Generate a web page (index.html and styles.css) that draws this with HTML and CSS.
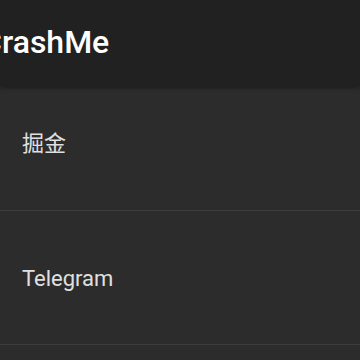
FILE: index.html
```html
<!DOCTYPE html>
<html>
<head>
<meta charset="utf-8">
<link rel="stylesheet" href="styles.css">
</head>
<body>
<header class="appbar">
  <h1 class="title">CrashMe</h1>
</header>
<ul class="list">
  <li class="item first">掘金</li>
  <li class="item">Telegram</li>
  <li class="item empty"></li>
</ul>
</body>
</html>
```
FILE: styles.css
```css
html, body {
  margin: 0;
  padding: 0;
  background: #2c2c2c;
  overflow: hidden;
  width: 360px;
  height: 360px;
}
body {
  font-family: Roboto, "Noto Sans CJK SC", sans-serif;
}
.appbar {
  height: 86px;
  box-sizing: border-box;
  padding-top: 26px;
  background: #212121;
  box-shadow: 0 2px 4px rgba(0,0,0,0.35);
  position: relative;
  z-index: 1;
  overflow: hidden;
}
.title {
  margin: 0 0 0 -19px;
  font-size: 32px;
  line-height: 32px;
  font-weight: 500;
  color: #ffffff;
  white-space: nowrap;
}
.list {
  list-style: none;
  margin: 0;
  padding: 0;
}
.item {
  height: 134px;
  box-sizing: border-box;
  padding: 53px 0 0 22px;
  font-size: 22px;
  line-height: 30px;
  color: #e0e0e0;
  border-bottom: 1px solid #3d3d3d;
}
.item.first {
  height: 125px;
  padding-top: 43px;
}
```
